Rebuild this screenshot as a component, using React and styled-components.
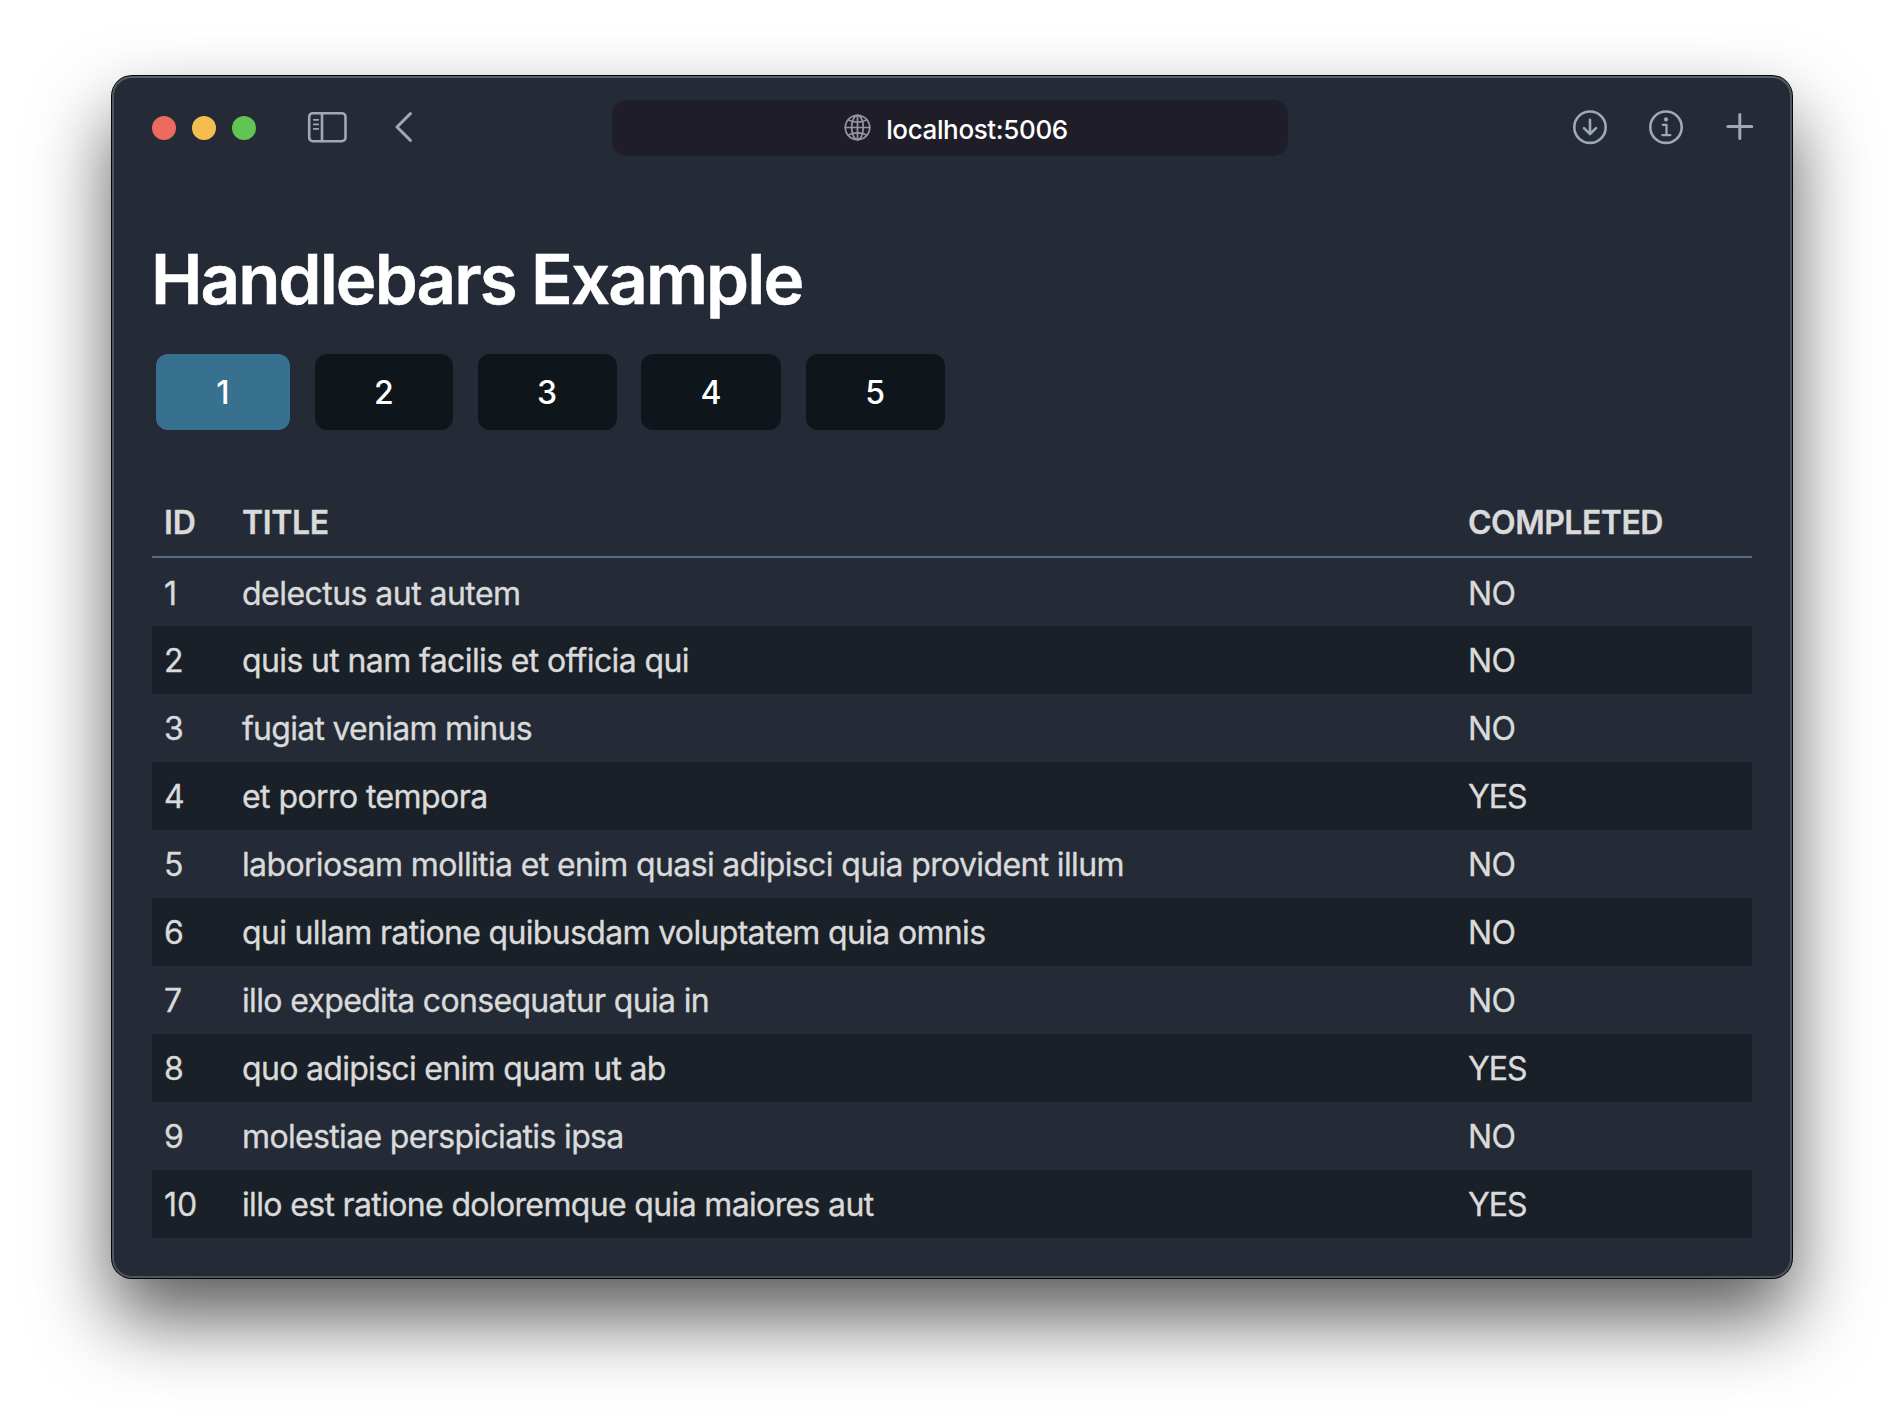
import React from 'react';
import styled, { createGlobalStyle } from 'styled-components';

const GlobalStyle = createGlobalStyle`
  *, *::before, *::after { box-sizing: border-box; }
  html, body { margin: 0; background: #fff; }
  body {
    height: 1426px;
    overflow: hidden;
    font-family: Inter, "Liberation Sans", sans-serif;
    -webkit-font-smoothing: antialiased;
  }
`;

const Desktop = styled.div`
  height: 1426px;
  padding: 76px 112px 0;
  overflow: hidden;
`;

const Window = styled.main`
  height: 1202px;
  border-radius: 20px;
  background: #242b37;
  overflow: visible;
  box-shadow:
    inset 0 2px 0 rgba(255, 255, 255, 0.07),
    inset 0 0 0 2px rgba(255, 255, 255, 0.2),
    0 0 0 1px #050607,
    0 40px 78px rgba(0, 0, 0, 0.65);
`;

const Toolbar = styled.header`
  display: grid;
  grid-template-columns: 500px 676px 1fr;
  align-items: center;
  height: 104px;
`;

const ToolGroup = styled.div`
  display: flex;
  align-items: center;
  padding-left: 40px;
`;

const Lights = styled.div`
  display: flex;
  gap: 16px;
  margin-right: 51px;
`;

const Light = styled.span`
  width: 24px;
  height: 24px;
  border-radius: 50%;
  background: ${(p) => p.$color};
`;

const Icon = styled.svg`
  display: block;
  flex: none;
  width: ${(p) => p.$w}px;
  height: ${(p) => p.$h}px;
  fill: none;
  stroke: ${(p) => p.$color || '#9fa8b5'};
  stroke-width: ${(p) => p.$stroke || 2.6};
  stroke-linecap: round;
  stroke-linejoin: round;
`;

const AddressBar = styled.div`
  display: flex;
  align-items: center;
  justify-content: center;
  gap: 15px;
  height: 56px;
  padding: 0 0 2px 12px;
  border-radius: 15px;
  background: #1f1d27;
  color: #fff;
`;

const Address = styled.span`
  padding-top: 5px;
  font-size: 26px;
  font-weight: 500;
  line-height: 32px;
  letter-spacing: -0.37px;
`;

const Actions = styled.div`
  display: flex;
  align-items: center;
  justify-content: flex-end;
  gap: 40px;
  padding: 0 38.4px 2px 0;
`;

const Page = styled.section`
  padding: 59px 40px 0;
`;

const Title = styled.h1`
  margin: 0 0 35px -1px;
  color: #fff;
  font-size: 69px;
  font-weight: 600;
  line-height: 80px;
  letter-spacing: -1.92px;
  -webkit-text-stroke: 0.5px #fff;
`;

const Pager = styled.nav`
  display: flex;
  gap: 24.6px;
  margin: 0 0 58px 4px;
`;

const PageButton = styled.button`
  width: ${(p) => p.$width}px;
  height: 76px;
  padding: 1px 0 0;
  border: 0;
  border-radius: 12px;
  background: ${(p) => (p.$active ? '#38708f' : '#0f161b')};
  color: #fff;
  font: 500 32px/48px Inter, "Liberation Sans", sans-serif;
`;

const Table = styled.table`
  width: 1600px;
  table-layout: fixed;
  border-collapse: separate;
  border-spacing: 0;
  color: #dadada;
  font-size: 32px;
  line-height: 48px;
  text-align: left;
  -webkit-text-stroke: 0.35px #dadada;
`;

const Column = styled.col`
  width: ${(p) => p.$width}px;
`;

const HeadCell = styled.th`
  padding: 11px 12px 9px;
  border-bottom: 2px solid #596b86;
  font-weight: 600;
  letter-spacing: ${(p) => p.$tracking || 0}px;
`;

const Row = styled.tr`
  &:nth-child(even) { background: #1a2027; }
  &:first-child > td { padding-top: 12px; padding-bottom: 8px; }
`;

const Cell = styled.td`
  padding: 11px 12px 9px;
  white-space: nowrap;
  letter-spacing: ${(p) => p.$tracking || 0}px;
`;

const pages = [
  { label: 1, width: 134 },
  { label: 2, width: 138.4 },
  { label: 3, width: 139 },
  { label: 4, width: 139.8 },
  { label: 5, width: 139 },
];

const todos = [
  { title: 'delectus aut autem', done: false, tracking: -0.54 },
  { title: 'quis ut nam facilis et officia qui', done: false, tracking: -0.62 },
  { title: 'fugiat veniam minus', done: false, tracking: -0.73 },
  { title: 'et porro tempora', done: true, tracking: -0.58 },
  { title: 'laboriosam mollitia et enim quasi adipisci quia provident illum', done: false, tracking: -0.64 },
  { title: 'qui ullam ratione quibusdam voluptatem quia omnis', done: false, tracking: -0.67 },
  { title: 'illo expedita consequatur quia in', done: false, tracking: -0.66 },
  { title: 'quo adipisci enim quam ut ab', done: true, tracking: -0.69 },
  { title: 'molestiae perspiciatis ipsa', done: false, tracking: -0.65 },
  { title: 'illo est ratione doloremque quia maiores aut', done: true, tracking: -0.65 },
];

const SidebarIcon = styled((props) => (
  <Icon {...props} $w={40} $h={32} viewBox="0 0 40 32">
    <rect x="2.2" y="2.2" width="36.3" height="28" rx="3.6" />
    <path d="M15 2.2v28" />
    <path d="M6.8 8.8h4.4M6.8 13.4h4.4M6.8 17.9h4.4" style={{ strokeWidth: 1.8 }} />
  </Icon>
))`
  margin-bottom: 2px;
`;

const BackIcon = styled((props) => (
  <Icon {...props} $w={18} $h={30} $stroke={2.9} viewBox="0 0 18 30">
    <path d="M15.4 1.6 2 15l13.4 13.4" />
  </Icon>
))`
  margin: 0 0 2px 48px;
`;

const GlobeIcon = () => (
  <Icon $w={27} $h={27} $color="#9893a2" $stroke={1.7} viewBox="0 0 27 27">
    <circle cx="13.5" cy="13.5" r="12.2" />
    <ellipse cx="13.5" cy="13.5" rx="5.8" ry="12.2" />
    <path d="M13.5 1.3v24.4M1.3 13.5h24.4" />
    <path d="M4.3 5.9c4.8 3 13.6 3 18.4 0M4.3 21.1c4.8-3 13.6-3 18.4 0" />
  </Icon>
);

const DownloadIcon = () => (
  <Icon $w={36} $h={36} viewBox="0 0 36 36">
    <circle cx="18" cy="18.2" r="15.7" />
    <path d="M18 10.8v14M12 19.2l6 6 6-6" />
  </Icon>
);

const InfoIcon = () => (
  <Icon $w={36} $h={36} viewBox="0 0 36 36">
    <circle cx="18" cy="18.2" r="15.7" />
    <circle cx="18" cy="10.4" r="2.1" fill="#9fa8b5" style={{ stroke: 'none' }} />
    <path d="M14.8 15.8h3.7v10.2M14.3 26.1h8.1" style={{ strokeWidth: 2.2 }} />
  </Icon>
);

const PlusIcon = () => (
  <Icon $w={30} $h={30} $stroke={3} viewBox="0 0 30 30">
    <path d="M15.8 2.6v24M3.8 14.6h24" />
  </Icon>
);

export default function App() {
  return (
    <>
      <GlobalStyle />
      <Desktop>
        <Window>
          <Toolbar>
            <ToolGroup>
              <Lights>
                <Light $color="#ed6a5e" />
                <Light $color="#f5bd4f" />
                <Light $color="#61c455" />
              </Lights>
              <SidebarIcon />
              <BackIcon />
            </ToolGroup>
            <AddressBar>
              <GlobeIcon />
              <Address>localhost:5006</Address>
            </AddressBar>
            <Actions>
              <DownloadIcon />
              <InfoIcon />
              <PlusIcon />
            </Actions>
          </Toolbar>
          <Page>
            <Title>Handlebars Example</Title>
            <Pager>
              {pages.map((p) => (
                <PageButton key={p.label} $width={p.width} $active={p.label === 1}>
                  {p.label}
                </PageButton>
              ))}
            </Pager>
            <Table>
              <colgroup>
                <Column $width={78} />
                <Column $width={1226} />
                <Column $width={296} />
              </colgroup>
              <thead>
                <tr>
                  <HeadCell>ID</HeadCell>
                  <HeadCell $tracking={-0.35}>TITLE</HeadCell>
                  <HeadCell $tracking={-0.5}>COMPLETED</HeadCell>
                </tr>
              </thead>
              <tbody>
                {todos.map((todo, i) => (
                  <Row key={todo.title}>
                    <Cell>{i + 1}</Cell>
                    <Cell $tracking={todo.tracking}>{todo.title}</Cell>
                    <Cell $tracking={todo.done ? -1 : -0.6}>{todo.done ? 'YES' : 'NO'}</Cell>
                  </Row>
                ))}
              </tbody>
            </Table>
          </Page>
        </Window>
      </Desktop>
    </>
  );
}
